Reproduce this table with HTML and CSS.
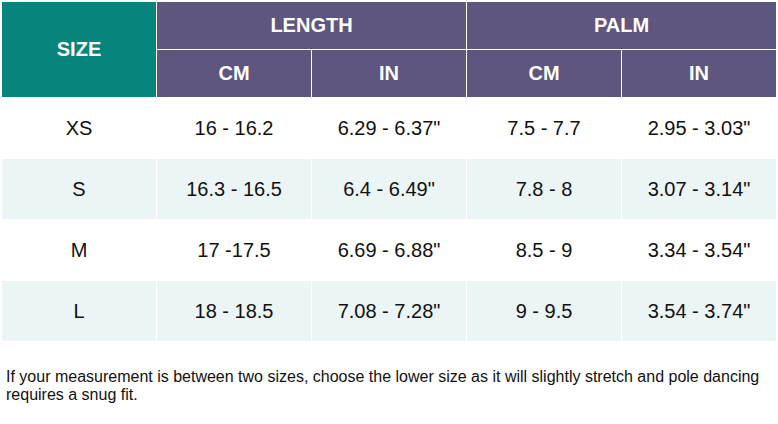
FILE: index.html
```html
<!DOCTYPE html>
<html>
<head>
<meta charset="utf-8">
<link rel="stylesheet" href="styles.css">
</head>
<body>
<table class="size-table">
  <colgroup>
    <col class="c"><col class="c"><col class="c"><col class="c"><col class="c">
  </colgroup>
  <thead>
    <tr class="hrow">
      <th class="size-head" rowspan="2">SIZE</th>
      <th class="group-head" colspan="2">LENGTH</th>
      <th class="group-head" colspan="2">PALM</th>
    </tr>
    <tr class="hrow">
      <th class="group-head">CM</th>
      <th class="group-head">IN</th>
      <th class="group-head">CM</th>
      <th class="group-head">IN</th>
    </tr>
  </thead>
  <tbody>
    <tr class="brow">
      <td>XS</td><td>16 - 16.2</td><td>6.29 - 6.37"</td><td>7.5 - 7.7</td><td>2.95 - 3.03"</td>
    </tr>
    <tr class="brow alt">
      <td>S</td><td>16.3 - 16.5</td><td>6.4 - 6.49"</td><td>7.8 - 8</td><td>3.07 - 3.14"</td>
    </tr>
    <tr class="brow">
      <td>M</td><td>17 -17.5</td><td>6.69 - 6.88"</td><td>8.5 - 9</td><td>3.34 - 3.54"</td>
    </tr>
    <tr class="brow alt">
      <td>L</td><td>18 - 18.5</td><td>7.08 - 7.28"</td><td>9 - 9.5</td><td>3.54 - 3.74"</td>
    </tr>
  </tbody>
</table>
<p class="note">If your measurement is between two sizes, choose the lower size as it will slightly stretch and pole dancing requires a snug fit.</p>
</body>
</html>
```

FILE: styles.css
```css
html, body {
  margin: 0;
  padding: 0;
  background: #ffffff;
}
body {
  font-family: "Liberation Sans", Arial, sans-serif;
  color: #111111;
}
.size-table {
  margin: 1px;
  width: 776px;
  table-layout: fixed;
  border-collapse: separate;
  border-spacing: 1px;
  background: #ffffff;
}
.size-table .c {
  width: 154px;
}
.size-table th,
.size-table td {
  padding: 0;
  text-align: center;
  vertical-align: middle;
  font-size: 20px;
}
.hrow {
  height: 47px;
}
.size-table th {
  color: #ffffff;
  font-weight: bold;
}
.size-head {
  background: #07847b;
}
.group-head {
  background: #5e567e;
}
.brow {
  height: 60px;
}
.brow td {
  background: #ffffff;
}
.brow.alt td {
  background: #ebf5f6;
}
.note {
  margin: 26px 6px 0 6px;
  font-size: 16px;
  line-height: normal;
  color: #111111;
}
```
